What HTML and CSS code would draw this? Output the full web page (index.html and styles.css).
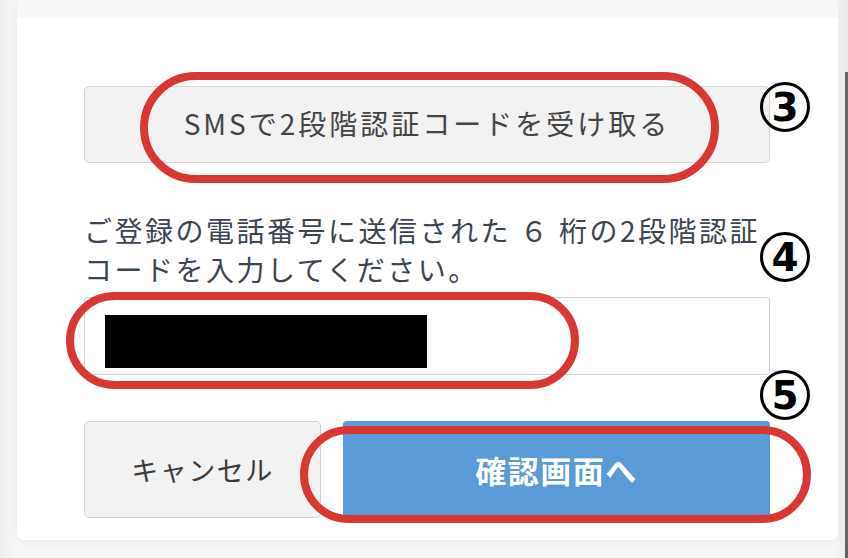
FILE: index.html
```html
<!DOCTYPE html>
<html lang="ja">
<head>
    <meta charset="UTF-8">
    <meta name="viewport" content="width=device-width, initial-scale=1.0">
    <link rel="stylesheet" href="styles.css">
    <title>2段階認証</title>
</head>
<body>
    <div class="page">
        <div class="card">
            <div class="card__head"></div>
            <div class="card__body">
                <button class="btn btn--sms">SMSで2段階認証コードを受け取る</button>

                <p class="hint">ご登録の電話番号に送信された ６ 桁の2段階認証コードを入力してください。</p>

                <div class="code-field">
                    <input class="code-input" type="text" aria-label="2段階認証コード">
                    <span class="masked"></span>
                </div>

                <div class="actions">
                    <button class="btn btn--cancel">キャンセル</button>
                    <button class="btn btn--primary">確認画面へ</button>
                </div>
            </div>

            <!-- annotations -->
            <span class="ring ring--sms"></span>
            <span class="ring ring--code"></span>
            <span class="ring ring--submit"></span>
            <span class="step step--3">3</span>
            <span class="step step--4">4</span>
            <span class="step step--5">5</span>
        </div>
        <div class="scrollbar"></div>
    </div>
</body>
</html>
```

FILE: styles.css
```css
*{box-sizing: border-box; margin: 0;}

body{background: #f3f4f6; font-family: "Noto Sans CJK JP", "Noto Sans", sans-serif; color: #3c4450;}

.page{position: relative; height: 558px; padding-left: 17px; background: linear-gradient(90deg, #eef0f2 0, #f6f7f8 17px, #f6f7f8 835px, #e9eaec 848px);}
.card{position: relative; width: 821px; background: #fff; border-radius: 0 0 7px 7px; box-shadow: 0 2px 8px rgba(0,0,0,0.06);}
.card__head{height: 18px; background: #f8f8f8;}
.card__body{padding: 68px 68px 22px 67px;}

.btn{display: block; font-family: inherit; cursor: pointer; border-radius: 5px;}
.btn--sms{width: 100%; height: 77px; background: #f2f2f2; border: 1px solid #d6d6d6; color: #444; font-size: 28px; letter-spacing: 3px; padding: 0 0 4px;}

.hint{max-width: 682px; margin-top: 48px; font-size: 28px; line-height: 39px; letter-spacing: 2.5px;}

.code-field{position: relative; margin-top: 8px;}
.code-input{display: block; width: 100%; height: 78px; border: 1px solid #d0d0d0; border-radius: 3px; background: #fff;}
.masked{position: absolute; left: 21px; top: 18px; width: 322px; height: 53px; background: #000;}

.actions{display: flex; gap: 22px; margin-top: 46px;}
.btn--cancel{width: 237px; height: 97px; background: #f2f2f2; border: 1px solid #d2d2d2; color: #3a3a3a; font-size: 27px; letter-spacing: 1.5px;}
.btn--primary{flex: 1; height: 97px; background: #5a9ad6; border: none; border-radius: 4px; color: #fff; font-size: 31px; font-weight: 700; letter-spacing: 1.5px;}

.ring{position: absolute; border: 8px solid #d93733; border-radius: 60px; pointer-events: none;}
.ring--sms{left: 123px; top: 72px; width: 579px; height: 111px;}
.ring--code{left: 49px; top: 292px; width: 513px; height: 97px;}
.ring--submit{left: 283px; top: 426px; width: 511px; height: 97px;}

.step{position: absolute; left: 743px; width: 50px; height: 50px; border: 3px solid #000; border-radius: 50%; display: flex; align-items: center; justify-content: center; font-family: "DejaVu Sans", sans-serif; font-weight: 700; font-size: 39px; line-height: 1; color: #000;}
.step--3{top: 82px;}
.step--4{top: 232px;}
.step--5{top: 370px;}

.scrollbar{position: absolute; right: 0; top: 72px; bottom: 0; width: 3px; background: #666;}
```
